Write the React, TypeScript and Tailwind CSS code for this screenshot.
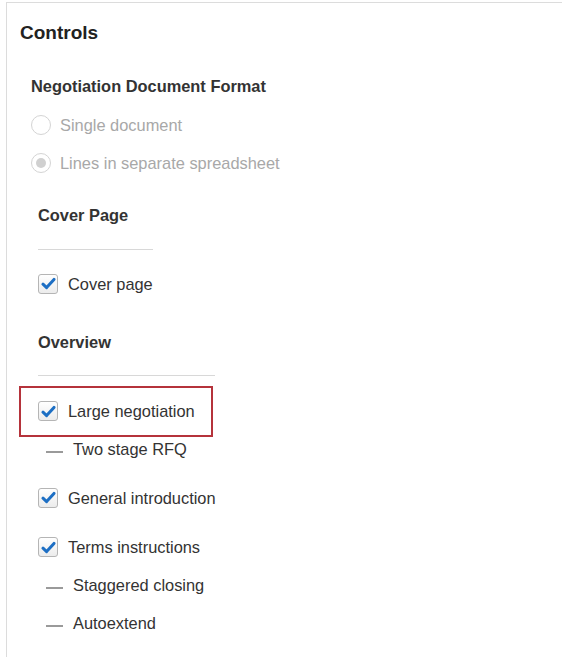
import React from "react";

const font = { fontFamily: '"Liberation Sans", Arial, sans-serif' };

function Check() {
  return (
    <span className="flex h-[20px] w-[20px] shrink-0 items-center justify-center rounded-[3px] border border-[#b5b5b5] bg-gradient-to-b from-white to-[#ececec]">
      <svg width="15" height="13" viewBox="0 0 15 13" fill="none">
        <path d="M2 7.2 L5.6 10.6 L13 2.4" stroke="#1d6fc4" strokeWidth="3" strokeLinecap="round" strokeLinejoin="round" />
      </svg>
    </span>
  );
}

function CheckRow({ label }: { label: string }) {
  return (
    <div className="flex items-center gap-[10px]">
      <Check />
      <span className="text-[16.4px] text-[#333]">{label}</span>
    </div>
  );
}

function DashRow({ label }: { label: string }) {
  return (
    <div className="flex items-center">
      <span className="ml-[8px] mt-[6px] h-[2px] w-[17px] bg-[#9a9a9a]" />
      <span className="ml-[10px] text-[16.4px] text-[#333]">{label}</span>
    </div>
  );
}

export default function App() {
  return (
    <div className="min-h-[657px] w-[562px] bg-white pl-[6px] pt-[2px]" style={font}>
      <div className="flex h-[655px] flex-col border-l border-t border-[#dcdcdc]">
        <div className="ml-[13px] flex h-[60px] items-center text-[19px] font-bold text-[#222]">Controls</div>
        <div className="ml-[24px] flex h-[46px] items-center text-[16.4px] font-bold text-[#333]">
          Negotiation Document Format
        </div>
        <div className="ml-[24px] flex h-[32px] items-center gap-[9px]">
          <span className="h-[20px] w-[20px] rounded-full border border-[#d4d4d4] bg-white" />
          <span className="text-[16.4px] text-[#a8a8a8]">Single document</span>
        </div>
        <div className="ml-[24px] flex h-[44px] items-center gap-[9px]">
          <span className="flex h-[20px] w-[20px] items-center justify-center rounded-full border border-[#d4d4d4] bg-white">
            <span className="h-[10px] w-[10px] rounded-full bg-[#d0d0d0]" />
          </span>
          <span className="text-[16.4px] text-[#a8a8a8]">Lines in separate spreadsheet</span>
        </div>

        <div className="ml-[31px] flex h-[60px] items-center text-[16.4px] font-bold text-[#333]">Cover Page</div>
        <div className="ml-[31px] mt-[4px] h-px w-[115px] bg-[#d8d8d8]" />
        <div className="ml-[31px] flex h-[68px] items-center">
          <CheckRow label="Cover page" />
        </div>

        <div className="ml-[31px] flex h-[48px] items-center text-[16.4px] font-bold text-[#333]">Overview</div>
        <div className="ml-[31px] mt-[9px] h-px w-[177px] bg-[#d8d8d8]" />

        <div className="ml-[12px] mt-[10px] flex h-[51px] w-[194px] items-center border-2 border-[#b5333b] pl-[17px]">
          <CheckRow label="Large negotiation" />
        </div>

        <div className="ml-[31px] flex h-[24px] items-center">
          <DashRow label="Two stage RFQ" />
        </div>
        <div className="ml-[31px] flex h-[74px] items-center">
          <CheckRow label="General introduction" />
        </div>
        <div className="ml-[31px] flex h-[24px] items-center">
          <CheckRow label="Terms instructions" />
        </div>
        <div className="ml-[31px] flex h-[52px] items-center">
          <DashRow label="Staggered closing" />
        </div>
        <div className="ml-[31px] flex h-[24px] items-center">
          <DashRow label="Autoextend" />
        </div>
      </div>
    </div>
  );
}
